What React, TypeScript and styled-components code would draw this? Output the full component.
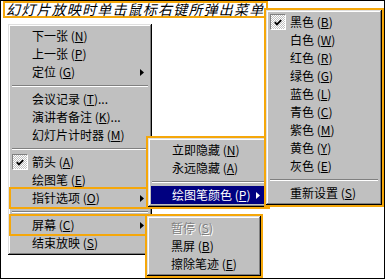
import React from 'react';
import styled, { createGlobalStyle, css } from 'styled-components';

const ORANGE = '#f5a70a';

interface Entry {
  label?: string;
  hot?: string;
  tail?: string;
  sep?: boolean;
  checked?: boolean;
  sub?: boolean;
  active?: boolean;
  disabled?: boolean;
  marked?: boolean;
}

const mainItems: Entry[] = [
  { label: '下一张', hot: 'N' },
  { label: '上一张', hot: 'P' },
  { label: '定位', hot: 'G', sub: true },
  { sep: true },
  { label: '会议记录', hot: 'T', tail: '...' },
  { label: '演讲者备注', hot: 'K', tail: '...' },
  { label: '幻灯片计时器', hot: 'M' },
  { sep: true },
  { label: '箭头', hot: 'A', checked: true },
  { label: '绘图笔', hot: 'E' },
  { label: '指针选项', hot: 'O', sub: true, marked: true },
  { sep: true },
  { label: '屏幕', hot: 'C', sub: true, marked: true },
  { label: '结束放映', hot: 'S' },
];

const pointerItems: Entry[] = [
  { label: '立即隐藏', hot: 'N' },
  { label: '永远隐藏', hot: 'A' },
  { sep: true },
  { label: '绘图笔颜色', hot: 'P', sub: true, active: true },
];

const colorItems: Entry[] = [
  { label: '黑色', hot: 'B', checked: true },
  { label: '白色', hot: 'W' },
  { label: '红色', hot: 'R' },
  { label: '绿色', hot: 'G' },
  { label: '蓝色', hot: 'L' },
  { label: '青色', hot: 'C' },
  { label: '紫色', hot: 'M' },
  { label: '黄色', hot: 'Y' },
  { label: '灰色', hot: 'E' },
  { sep: true },
  { label: '重新设置', hot: 'S' },
];

const screenItems: Entry[] = [
  { label: '暂停', hot: 'S', disabled: true },
  { label: '黑屏', hot: 'B' },
  { label: '擦除笔迹', hot: 'E' },
];

function CheckMark() {
  return (
    <svg width="8" height="7" viewBox="0 0 8 7">
      <polyline points="0.8,3.2 3,5.4 7.2,1.2" fill="none" stroke="#000" strokeWidth="1.8" />
    </svg>
  );
}

function Arrow({ color }: { color: string }) {
  return (
    <svg width="4" height="7" viewBox="0 0 4 7">
      <polygon points="0,0 4,3.5 0,7" fill={color} />
    </svg>
  );
}

function MenuRows({ items }: { items: Entry[] }) {
  return (
    <>
      {items.map((it, i) =>
        it.sep ? (
          <Separator key={i} />
        ) : (
          <Row key={i} $active={it.active} $disabled={it.disabled} $marked={it.marked}>
            <CheckSlot>{it.checked && <CheckBox><CheckMark /></CheckBox>}</CheckSlot>
            <Label>
              {it.label} (<u>{it.hot}</u>){it.tail}
            </Label>
            {it.sub && <Arrow color={it.active ? '#fff' : '#000'} />}
          </Row>
        )
      )}
    </>
  );
}

export default function App() {
  return (
    <>
      <GlobalStyle />
      <Frame>
        <Title>幻灯片放映时单击鼠标右键所弹出菜单</Title>
        <MainMenu $w={144}>
          <MenuRows items={mainItems} />
        </MainMenu>
        <Popup $w={120} $x={147} $y={137} $z={2}>
          <MenuRows items={pointerItems} />
        </Popup>
        <Popup $w={116} $x={265} $y={9} $z={3}>
          <MenuRows items={colorItems} />
        </Popup>
        <Popup $w={114} $x={146} $y={215} $z={4}>
          <MenuRows items={screenItems} />
        </Popup>
      </Frame>
    </>
  );
}

const GlobalStyle = createGlobalStyle`
  html, body {
    margin: 0;
    padding: 0;
    background: #fff;
  }
  body {
    font-family: "Noto Sans CJK SC", "Liberation Sans", sans-serif;
  }
`;

const Frame = styled.div`
  position: relative;
  width: 385px;
  height: 279px;
  box-sizing: border-box;
  border: 1px solid #000;
  background: #fff;
  overflow: hidden;
`;

const Title = styled.div`
  width: 265px;
  height: 17px;
  margin-left: 2px;
  box-sizing: border-box;
  padding-left: 1px;
  border: 2px solid ${ORANGE};

  font-family: "Noto Sans CJK SC", sans-serif;
  font-style: italic;
  font-size: 14px;
  line-height: 13px;
  letter-spacing: 1.2px;
  color: #000;
  white-space: nowrap;
`;

const MenuBox = styled.div<{ $w: number }>`
  width: ${({ $w }) => $w}px;
  box-sizing: border-box;
  padding: 3px;
  background: #c0c0c0;
  box-shadow: inset -1px -1px #000, inset 1px 1px #dfdfdf, inset -2px -2px #808080, inset 2px 2px #fff;
`;

const MainMenu = styled(MenuBox)`
  margin: 6px 0 0 7px;
`;

const Popup = styled(MenuBox)<{ $x: number; $y: number; $z: number }>`
  position: absolute;
  left: ${({ $x }) => $x}px;
  top: ${({ $y }) => $y}px;
  z-index: ${({ $z }) => $z};
  outline: 2px solid ${ORANGE};
`;

const Row = styled.div<{ $active?: boolean; $disabled?: boolean; $marked?: boolean }>`
  display: flex;
  align-items: center;
  height: 18px;
  padding: 0 5px 0 1px;

  font-size: 12px;
  color: #000;
  white-space: nowrap;

  ${({ $active }) =>
    $active &&
    css`
      background: #000080;
      color: #fff;
    `}

  ${({ $disabled }) =>
    $disabled &&
    css`
      color: #808080;
      text-shadow: 1px 1px 0 #fff;
    `}

  ${({ $marked }) =>
    $marked &&
    css`
      outline: 2px solid ${ORANGE};
    `}
`;

const CheckSlot = styled.div`
  display: flex;
  align-items: center;
  width: 20px;
  height: 18px;
  flex: none;
`;

const CheckBox = styled.div`
  display: flex;
  align-items: center;
  justify-content: center;
  width: 16px;
  height: 16px;
  box-sizing: border-box;
  border-top: 1px solid #808080;
  border-left: 1px solid #808080;
  border-right: 1px solid #fff;
  border-bottom: 1px solid #fff;
  background-color: #fff;
  background-image: repeating-conic-gradient(#c0c0c0 0% 25%, #fff 0% 50%);
  background-size: 2px 2px;
`;

const Label = styled.span`
  flex: 1;
  line-height: 18px;

  u {
    text-decoration: underline;
    text-underline-offset: 1px;
  }
`;

const Separator = styled.div`
  display: flex;
  align-items: center;
  height: 9px;
  padding: 0 1px;

  &::before {
    content: '';
    flex: 1;
    border-top: 1px solid #808080;
    border-bottom: 1px solid #fff;
  }
`;
